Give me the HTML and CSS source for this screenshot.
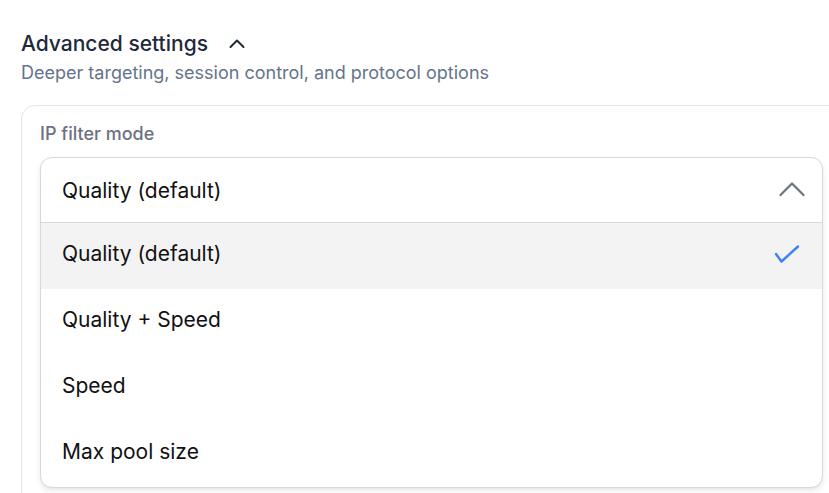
FILE: index.html
```html
<!DOCTYPE html>
<html lang="en">
<head>
<meta charset="utf-8">
<title>Advanced settings</title>
<link rel="stylesheet" href="styles.css">
</head>
<body>
<div class="page">
  <div class="section-head">
    <h2 class="title">Advanced settings</h2>
    <svg class="title-chevron" width="16" height="11" viewBox="0 0 16 11" aria-hidden="true"><polyline points="1.5,9 8,2.5 14.5,9" fill="none" stroke="#1f2937" stroke-width="2" stroke-linecap="round" stroke-linejoin="round"/></svg>
  </div>
  <p class="subtitle">Deeper targeting, session control, and protocol options</p>
  <div class="card">
    <div class="field-label">IP filter mode</div>
    <div class="select">
      <div class="trigger">
        <span>Quality (default)</span>
        <svg width="26" height="16" viewBox="0 0 26 16" aria-hidden="true"><polyline points="1.5,14 13,2.5 24.5,14" fill="none" stroke="#6b7280" stroke-width="2.2" stroke-linecap="round" stroke-linejoin="round"/></svg>
      </div>
      <ul class="options">
        <li class="option selected"><span>Quality (default)</span>
          <svg width="26" height="20" viewBox="0 0 26 20" aria-hidden="true"><polyline points="2,9 7.5,16.5 24,1.5" fill="none" stroke="#3b82f6" stroke-width="2.4" stroke-linecap="round" stroke-linejoin="round"/></svg>
        </li>
        <li class="option"><span>Quality + Speed</span></li>
        <li class="option"><span>Speed</span></li>
        <li class="option"><span>Max pool size</span></li>
      </ul>
    </div>
  </div>
</div>
</body>
</html>
```
FILE: styles.css
```css
html, body {
  margin: 0;
  padding: 0;
  overflow: hidden;
  background: #ffffff;
}
body {
  font-family: Inter, "Noto Sans", "Liberation Sans", sans-serif;
  color: #111827;
}
.page {
  width: 821px;
  height: 493px;
  padding: 30px 0 0 21px;
}
.section-head {
  display: flex;
  align-items: center;
  gap: 21px;
  height: 28px;
}
.title {
  margin: 0;
  font-size: 21px;
  font-weight: 500;
  color: #1e293b;
  line-height: 28px;
}
.title-chevron {
  margin-top: -1px;
}
.subtitle {
  margin: 3px 0 0;
  font-size: 18px;
  line-height: 24px;
  color: #64748b;
}
.card {
  margin-top: 20px;
  border: 1px solid #e2e4ea;
  border-radius: 14px;
  padding: 16px 18px 20px 18px;
  height: 400px;
}
.field-label {
  font-size: 18px;
  line-height: 24px;
  color: #6b7280;
  font-weight: 500;
}
.select {
  margin-top: 11px;
  border: 1px solid #d5d8df;
  border-radius: 12px;
  background: #fff;
  overflow: hidden;
  box-shadow: 0 3px 6px rgba(0, 0, 0, 0.08), 0 1px 2px rgba(0, 0, 0, 0.04);
}
.trigger {
  height: 64px;
  display: flex;
  align-items: center;
  justify-content: space-between;
  padding: 0 17px 0 21px;
  border-bottom: 1px solid #d3d8e2;
  font-size: 21px;
  color: #111111;
}
.trigger svg {
  margin-top: -3px;
}
.options {
  list-style: none;
  margin: 0;
  padding: 0;
}
.option {
  box-sizing: border-box;
  height: 66px;
  display: flex;
  align-items: center;
  justify-content: space-between;
  padding: 0 22px 5px 21px;
  font-size: 21px;
  color: #111111;
}
.option.selected {
  background: #f3f3f4;
}
.option.selected svg {
  margin-top: 3px;
}
```
